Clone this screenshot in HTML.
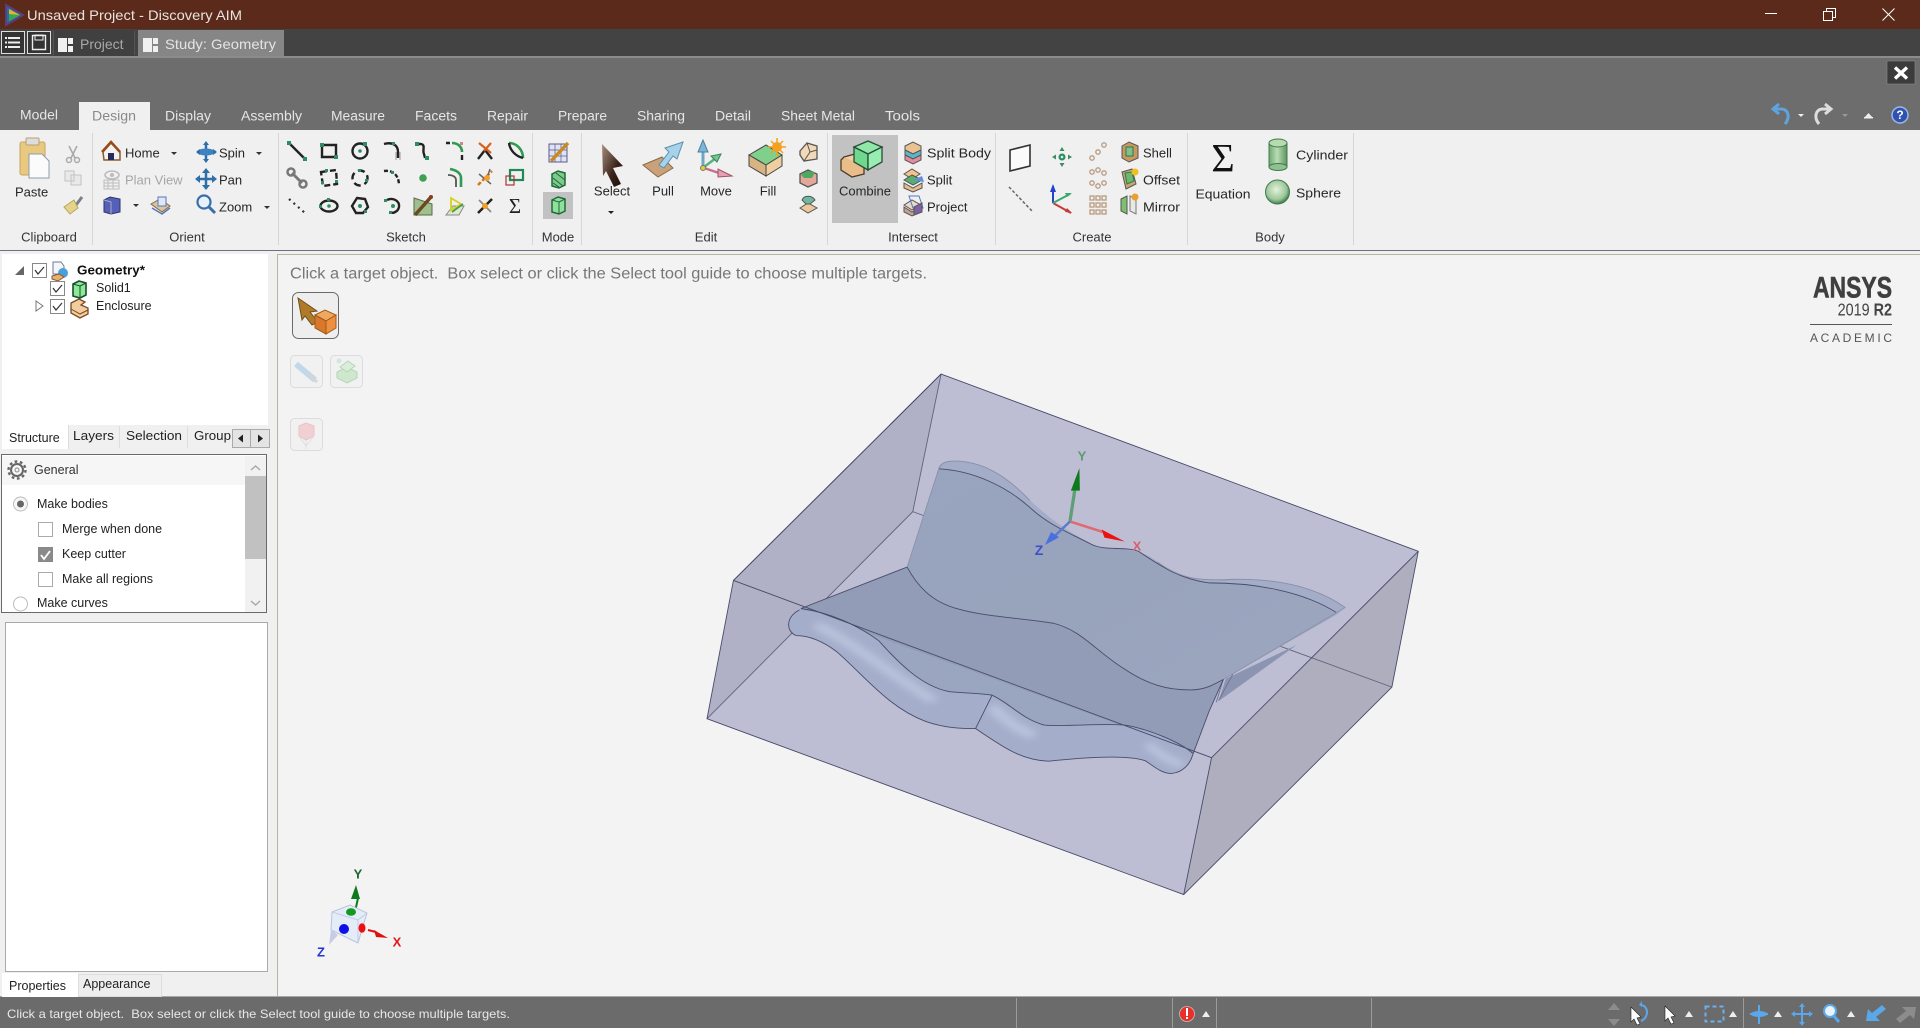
<!DOCTYPE html>
<html><head><meta charset="utf-8"><title>Unsaved Project - Discovery AIM</title>
<style>
html,body{margin:0;padding:0;width:1920px;height:1028px;overflow:hidden;background:#f0f0f0}
svg{position:absolute;left:0;top:0;display:block}
text{font-family:"Liberation Sans",sans-serif;font-size:13px;dominant-baseline:central;fill:#222}
.tab{font-size:13.5px;fill:#e6e6e6}
.rb{font-size:13px;fill:#262626}
.grp{font-size:13px;fill:#333}
.m{text-anchor:middle}
.k{fill:none;stroke:#222;stroke-width:2.4}
.g{fill:#2f8c62}
.ge{fill:none;stroke:#2f9a50;stroke-width:2.6}
.h{fill:none;stroke:#474c6a;stroke-width:.9;vector-effect:non-scaling-stroke}
.sep{stroke:#d6d6d6;stroke-width:1}
</style></head><body>
<svg width="1920" height="1028" viewBox="0 0 1920 1028">
<defs>
<linearGradient id="wall" x1="0" y1="0" x2="1" y2="1"><stop offset="0" stop-color="#99a4bf"/><stop offset=".5" stop-color="#98a3bc"/><stop offset="1" stop-color="#9fa8c1"/></linearGradient>
<radialGradient id="sph2" cx=".45" cy=".4" r=".6"><stop offset="0" stop-color="#e4f3dc"/><stop offset=".7" stop-color="#9cc79a"/><stop offset="1" stop-color="#3f7a4c"/></radialGradient>
<linearGradient id="cyl" x1="0" y1="0" x2="1" y2="0"><stop offset="0" stop-color="#6fa873"/><stop offset=".45" stop-color="#b9dcb4"/><stop offset="1" stop-color="#5b955f"/></linearGradient>
<linearGradient id="cur" x1="0" y1="0" x2="1" y2="1"><stop offset="0" stop-color="#a98f80"/><stop offset=".6" stop-color="#3a241a"/><stop offset="1" stop-color="#1a0e08"/></linearGradient>
<filter id="b1" x="-40%" y="-60%" width="180%" height="220%"><feGaussianBlur stdDeviation="9"/></filter>
</defs>

<!-- chrome backgrounds -->
<rect x="0" y="0" width="1920" height="29" fill="#5b2a1a"/>
<rect x="0" y="29" width="1920" height="27" fill="#434343"/>
<rect x="0" y="56" width="1920" height="2" fill="#8c8c8c"/>
<rect x="0" y="58" width="1920" height="72" fill="#6d6d6d"/>
<rect x="0" y="130" width="1920" height="120" fill="#f0f0f0"/>
<rect x="0" y="250" width="1920" height="1" fill="#6f6f80"/>
<rect x="0" y="251" width="1920" height="746" fill="#f0f0f0"/>
<rect x="277" y="255" width="1643" height="742" fill="#f3f3f3"/>
<path d="M277.5 997V254.5H1920" fill="none" stroke="#b8b4a4" stroke-width="1"/>
<rect x="0" y="997" width="1920" height="31" fill="#6b6b6b"/>
<rect x="0" y="996" width="1920" height="1" fill="#a8a8a8"/>

<!-- title -->
<g transform="translate(14,15)">
<path d="M-8 -10 L9 0 L-8 10Z" fill="#1f6fb0" stroke="#5f3d7a" stroke-width="2"/>
<path d="M-5 -6 L6 0 L-5 6Z" fill="#e3b52a"/><path d="M-5 -1 L6 0 L-5 6Z" fill="#36a84f"/>
</g>
<text x="27" y="15" style="font-size:14px;fill:#e8e3e0" textLength="215" lengthAdjust="spacingAndGlyphs">Unsaved Project - Discovery AIM</text>
<path d="M1765 13.5H1777" stroke="#fff" stroke-width="1"/>
<path d="M1823.5 11.5h9v9h-9zM1826.5 11.5v-3h9v9h-3" fill="none" stroke="#fff" stroke-width="1"/>
<path d="M1882.5 8.5l12 12M1894.5 8.5l-12 12" stroke="#fff" stroke-width="1"/>

<!-- second bar -->
<rect x="1.5" y="31.5" width="23" height="22" fill="#333" stroke="#ddd"/>
<path d="M8 38h12M8 42.5h12M8 47h12" stroke="#eee" stroke-width="2"/><path d="M5 38h2M5 42.5h2M5 47h2" stroke="#eee" stroke-width="2"/>
<rect x="27.5" y="31.5" width="23" height="22" fill="#333" stroke="#ddd"/>
<path d="M32.5 35.5h13v14h-13z" fill="none" stroke="#eee" stroke-width="1.4"/><rect x="35" y="35" width="8" height="5" fill="none" stroke="#eee"/>
<rect x="54" y="30" width="81" height="26" fill="#404040"/><path d="M53.500 31V55M134.500 31V55" stroke="#555"/>
<path d="M58 38h9v14h-9zM68 38h5v6h-5zM68 46h5v6h-5z" fill="#f0f0f0"/>
<text x="80" y="44" style="font-size:14px;fill:#a8a8a8">Project</text>
<rect x="138" y="30" width="146" height="26" fill="#868686"/>
<path d="M143 38h9v14h-9zM153 38h5v6h-5zM153 46h5v6h-5z" fill="#f0f0f0"/>
<text x="165" y="44" style="font-size:14px;fill:#e4e4e4" textLength="111" lengthAdjust="spacingAndGlyphs">Study: Geometry</text>

<!-- close X -->
<rect x="1887" y="61" width="28" height="23" fill="#3b3b3b" stroke="#888" stroke-width=".6"/>
<path d="M1895 67.500l12 11M1907 67.500l-12 11" stroke="#fff" stroke-width="3.400"/>

<!-- ribbon tabs -->
<rect x="79" y="102" width="71" height="28" fill="#f0f0f0"/>
<text x="20" y="115" class="tab" textLength="38" lengthAdjust="spacingAndGlyphs">Model</text>
<text x="92" y="116" class="tab" style="fill:#8a8a8a" textLength="44" lengthAdjust="spacingAndGlyphs">Design</text>
<text x="165" y="116" class="tab" textLength="46" lengthAdjust="spacingAndGlyphs">Display</text>
<text x="241" y="116" class="tab" textLength="61" lengthAdjust="spacingAndGlyphs">Assembly</text>
<text x="331" y="116" class="tab" textLength="54" lengthAdjust="spacingAndGlyphs">Measure</text>
<text x="415" y="116" class="tab" textLength="42" lengthAdjust="spacingAndGlyphs">Facets</text>
<text x="487" y="116" class="tab" textLength="41" lengthAdjust="spacingAndGlyphs">Repair</text>
<text x="558" y="116" class="tab" textLength="49" lengthAdjust="spacingAndGlyphs">Prepare</text>
<text x="637" y="116" class="tab" textLength="48" lengthAdjust="spacingAndGlyphs">Sharing</text>
<text x="715" y="116" class="tab" textLength="36" lengthAdjust="spacingAndGlyphs">Detail</text>
<text x="781" y="116" class="tab" textLength="74" lengthAdjust="spacingAndGlyphs">Sheet Metal</text>
<text x="885" y="116" class="tab" textLength="35" lengthAdjust="spacingAndGlyphs">Tools</text>

<!-- ribbon right icons -->
<path d="M1785 124 C1790 118 1789 110 1782 109 L1775 109 M1779 104 L1773 109 L1779 114" fill="none" stroke="#5ea4e0" stroke-width="3"/>
<path d="M1798 114h6l-3 3z" fill="#eee"/>
<path d="M1819 124 C1814 118 1815 110 1822 109 L1829 109 M1825 104 L1831 109 L1825 114" fill="none" stroke="#ddd" stroke-width="3"/>
<path d="M1842 114h6l-3 3z" fill="#999"/>
<path d="M1864 118l4.500 -5 4.500 5z" fill="#eee"/><rect x="1864" y="117" width="9" height="1.500" fill="#eee"/>
<circle cx="1900" cy="115" r="8" fill="#2f52b0" stroke="#9cb8e8" stroke-width="1.500"/>
<text x="1900" y="115" class="m" style="font-size:12px;font-weight:bold;fill:#fff">?</text>

<!-- group separators -->
<path class="sep" d="M92.500 133V245M278.500 133V245M532.500 133V245M581.500 133V245M827.500 133V245M995.500 133V245M1187.500 133V245M1353.500 133V245"/>

<!-- group labels -->
<text x="49" y="237" class="grp m">Clipboard</text>
<text x="187" y="237" class="grp m">Orient</text>
<text x="406" y="237" class="grp m">Sketch</text>
<text x="558" y="237" class="grp m">Mode</text>
<text x="706" y="237" class="grp m">Edit</text>
<text x="913" y="237" class="grp m">Intersect</text>
<text x="1092" y="237" class="grp m">Create</text>
<text x="1270" y="237" class="grp m">Body</text>

<!-- clipboard -->
<rect x="20" y="142" width="25" height="33" rx="2" fill="#e9c97f" stroke="#c9a55c"/>
<rect x="26" y="138" width="13" height="7" rx="1" fill="#ddd" stroke="#b9a070"/>
<path d="M29 154h13l7 7v17h-20z" fill="#fbfbfb" stroke="#8c9cb0"/>
<text x="15" y="192" class="rb">Paste</text>
<path d="M69 146l6 12M77 146l-6 12" stroke="#aaa" stroke-width="1.600"/><circle cx="69" cy="160" r="2.500" fill="none" stroke="#aaa" stroke-width="1.500"/><circle cx="77" cy="160" r="2.500" fill="none" stroke="#aaa" stroke-width="1.500"/>
<path d="M65 171h9l0 10h-9zM71 175h10v10h-10z" fill="#e9e9e9" stroke="#c2c2c2"/>
<path d="M82 197l-6 8" stroke="#7a7f8c" stroke-width="3"/><path d="M64 207 L74 200 L78 208 L70 214Z" fill="#e3d48a" stroke="#b9a55a"/>

<!-- orient -->
<path d="M103 152 L111 143 L120 152 V160 H104Z" fill="#f2f2f2" stroke="#8b5a2b" stroke-width="1.500"/>
<path d="M102 152 L111 142 L120 152" fill="none" stroke="#9a4a1a" stroke-width="2.500"/><rect x="108" y="153" width="6" height="7" fill="#2b2b5b"/>
<text x="125" y="153" class="rb">Home</text><path d="M171 152h6l-3 3z" fill="#333"/>
<ellipse cx="112" cy="175" rx="7" ry="4" fill="none" stroke="#bbb" stroke-width="1.500"/><circle cx="112" cy="175" r="2" fill="#bbb"/>
<path d="M104 180h15v9h-15z M104 183h15M104 186h15M108 180v9M113 180v9" fill="none" stroke="#bdbdbd"/>
<text x="125" y="180" class="rb" style="fill:#a6a6a6">Plan View</text>
<path d="M104 200 L110 197 L120 199 V212 L111 214 L104 212Z" fill="#5560b8" stroke="#30346a"/><path d="M104 200L111 202V214" fill="none" stroke="#aab"/>
<path d="M133 204h6l-3 3z" fill="#333"/>
<path d="M151 204 L160 199 L170 206 L162 212 Z" fill="#d9c3a0" stroke="#8a6a40"/><path d="M158 197h8v9h-8z" fill="#dfe7f6" stroke="#5578b8"/><path d="M152 208l10 6 8-6" fill="none" stroke="#5578b8" stroke-width="1.500"/>
<g stroke="#2f6fa8" stroke-width="2.500" fill="#3f82c0"><path d="M206 143V161M197 152H216" fill="none"/><ellipse cx="206" cy="152" rx="9" ry="3.500" stroke="none"/></g>
<path d="M206 141l-3 4h6zM206 163l-3-4h6zM196 152l4-3v6zM217 152l-4-3v6z" fill="#2f6fa8"/>
<text x="219" y="153" class="rb">Spin</text><path d="M256 152h6l-3 3z" fill="#333"/>
<path d="M206 170V188M197 179H215" stroke="#2f6fa8" stroke-width="2.500"/><path d="M206 168l-4 5h8zM206 190l-4-5h8zM195 179l5-4v8zM217 179l-5-4v8z" fill="#2f6fa8"/>
<text x="219" y="180" class="rb">Pan</text>
<circle cx="204" cy="202" r="6.500" fill="#e8f0fa" stroke="#3a6ea8" stroke-width="2.200"/><path d="M209 207l6 6" stroke="#3a6ea8" stroke-width="3"/>
<text x="219" y="207" class="rb">Zoom</text><path d="M264 206h6l-3 3z" fill="#333"/>

<!-- sketch icons -->
<g transform="translate(297,151)"><path class="k" d="M-7-7L7 7"/><rect class="g" x="-10" y="-10" width="4" height="4"/><rect class="g" x="6" y="6" width="4" height="4"/></g>
<g transform="translate(329,151)"><path class="k" d="M-7-6H7V6H-7Z"/><rect class="g" x="-9" y="-8" width="4" height="4"/><rect class="g" x="5" y="4" width="4" height="4"/></g>
<g transform="translate(360,151)"><circle class="k" r="7.500"/><circle class="g" r="1.800"/><rect class="g" x="3" y="-9" width="4" height="4"/></g>
<g transform="translate(393,151)"><path class="k" d="M-9-7C-2-9 5-7 5 1V7"/><path d="M3 1V9M7 1V9" stroke="#999" fill="none"/><rect class="g" x="-1" y="-9" width="3" height="3"/></g>
<g transform="translate(423,151)"><path class="k" d="M-7-7H-2C3-6-1-1 1 3L2 7"/><rect class="g" x="-8" y="-9" width="4" height="4"/><rect class="g" x="2" y="5" width="4" height="4"/></g>
<g transform="translate(455,151)"><path class="ge" d="M-3-8C3-8 7-4 7 1"/><path class="k" d="M-9-8H-5M7 4V9"/><rect x="5" y="-9" width="3" height="3" fill="#c88"/></g>
<g transform="translate(485,151)"><path class="k" d="M-7 8L0-1L7 8"/><path d="M-6-8L6 2M6-8L-1 0" stroke="#d9601a" stroke-width="2.200" fill="none"/></g>
<g transform="translate(515,151)"><path class="ge" d="M-6-8C2-8 8-1 8 7"/><path class="k" d="M-6-8C-5-1 0 5 8 7" stroke-width="1.800"/></g>
<g transform="translate(297,178)"><path d="M-5-5L5 5" stroke="#777" stroke-width="2.800"/><circle cx="-6" cy="-6" r="3.500" fill="none" stroke="#777" stroke-width="2.500"/><circle cx="6" cy="6" r="3.500" fill="none" stroke="#777" stroke-width="2.500"/></g>
<g transform="translate(329,178)"><path class="k" d="M-8-6L7-8L8 6L-6 8Z" stroke-dasharray="6 3"/><rect class="g" x="-4" y="-9" width="3" height="3"/><rect class="g" x="6" y="2" width="3" height="3"/><rect class="g" x="-8" y="3" width="3" height="3"/></g>
<g transform="translate(360,178)"><circle class="k" r="7.500" stroke-dasharray="7 4"/><rect class="g" x="-2" y="-9" width="3" height="3"/><rect class="g" x="5" y="1" width="3" height="3"/></g>
<g transform="translate(393,178)"><path class="k" d="M-9-7C-2-8 5-5 6 6" stroke-dasharray="4 2"/><rect class="g" x="-2" y="-7" width="3" height="3"/></g>
<g transform="translate(423,178)"><circle r="3.800" fill="#3fa050"/></g>
<g transform="translate(455,178)"><path class="ge" d="M-5-9C1-8 6-5 6 0V9"/><path d="M-7-3C-2-3 1-1 1 2V9" fill="none" stroke="#555" stroke-width="1.800"/></g>
<g transform="translate(485,178)"><path d="M-7 7L7-7" stroke="#d9761a" stroke-width="2.500" stroke-dasharray="4 2"/><path d="M-6-4L6 6M5-9L2 0" stroke="#666" stroke-width="1.500"/><circle cx="2" cy="0" r="3" fill="#f0a030"/></g>
<g transform="translate(515,178)"><rect x="-5" y="-8" width="13" height="10" fill="none" stroke="#1f8a55" stroke-width="2.200"/><rect x="-9" y="-2" width="8" height="9" fill="none" stroke="#a33" stroke-width="1.200"/></g>
<g transform="translate(297,206)"><path d="M-8-7L8 7" stroke="#333" stroke-width="2.200" stroke-dasharray="2 4"/></g>
<g transform="translate(329,206)"><ellipse class="k" rx="8.500" ry="5.500"/><circle class="g" r="1.800"/><rect class="g" x="-2" y="-8" width="3" height="3"/><rect class="g" x="-10" y="-1" width="3" height="3"/></g>
<g transform="translate(360,206)"><path class="k" d="M-3-8L5-7L8 1L3 7H-4L-8 0Z"/><circle class="g" r="2"/><rect class="g" x="4" y="4" width="3" height="3"/></g>
<g transform="translate(393,206)"><path class="k" d="M-6-6C0-9 7-5 6 1C5 6-1 8-2 6"/><rect class="g" x="-9" y="-7" width="3" height="3"/><circle class="g" r="2"/><rect class="g" x="-4" y="5" width="3" height="3"/></g>
<g transform="translate(423,206)"><path d="M-9-8L9-2V9H-9Z" fill="#9fbf8f" stroke="#556b44"/><path d="M-8 9L8-9" stroke="#6b4a20" stroke-width="3.500"/><circle cx="8" cy="-9" r="2" fill="#8a3a20"/></g>
<g transform="translate(455,206)"><path d="M-9 9L-2 0H9L4 9Z" fill="#dfe8d0" stroke="#888"/><path d="M-4-8L6-2L-4 4Z" fill="none" stroke="#d8d020" stroke-width="1.800"/><path d="M-3 6L8-2" stroke="#3f9f55" stroke-width="1.800"/></g>
<g transform="translate(485,206)"><path d="M-7 7L7-7" stroke="#222" stroke-width="2.500"/><path d="M-6-6L6 6" stroke="#888" stroke-width="1.800"/><circle r="3" fill="#f2a024"/></g>
<text x="515" y="206" class="m" style="font-size:21px;font-family:'Liberation Serif',serif;fill:#222">Σ</text>

<!-- mode -->
<path d="M549 144h18v18h-18z" fill="#dfe3f2" stroke="#5a5a90"/><path d="M555 144v18M561 144v18M549 150h18M549 156h18" stroke="#5a5a90" stroke-width=".7"/><path d="M551 161L568 143" stroke="#c98a20" stroke-width="3.400"/>
<path d="M552 174l6-3 7 2v12l-6 3-7-2z" fill="#7fc98a" stroke="#1f6a3a" stroke-width="1.500"/><path d="M553 178l10 8M553 183l6 4M556 173l9 7" stroke="#1f6a3a"/>
<rect x="543" y="192" width="30" height="27" fill="#c2c2c2"/>
<path d="M552 200l6-3 7 2v12l-6 3-7-2z" fill="#8fe09a" stroke="#1f6a3a" stroke-width="1.500"/><path d="M552 200l7 2v12M559 202l6-3" fill="none" stroke="#1f6a3a"/>

<!-- edit -->
<path d="M602 144L623 166L613 168L621 184L614 187L606 171L603 176Z" fill="url(#cur)"/>
<text x="612" y="191" class="rb m">Select</text><path d="M608 211h6l-3 3z" fill="#222"/>
<path d="M643 165L662 157L673 168L658 177Z" fill="#c9a27c" stroke="#8a6a48"/>
<path d="M683 142L665 148L669 152L659 165L664 168L673 156L677 159Z" fill="#a6d3ea" stroke="#5a8fb0"/>
<text x="663" y="191" class="rb m">Pull</text>
<path d="M703 168V150" stroke="#6fa6c8" stroke-width="3"/><path d="M703 140L698 152H708Z" fill="#7fb6d8" stroke="#4a80a0"/>
<path d="M704 167L720 155" stroke="#58b07a" stroke-width="2.500"/><path d="M721 154L711 156L717 162Z" fill="#6fc98f" stroke="#3a8058"/>
<path d="M704 168L722 174" stroke="#c8708a" stroke-width="2.500"/><path d="M732 176L718 169V177Z" fill="#e4a0b0" stroke="#a05068"/>
<circle cx="703" cy="168" r="2.500" fill="#e3d030" stroke="#777"/>
<text x="716" y="191" class="rb m">Move</text>
<path d="M749 155L766 145L782 155L766 165Z" fill="#7fd08a" stroke="#444"/><path d="M749 155V166L766 176V165Z" fill="#d8b483" stroke="#444"/><path d="M782 155V166L766 176V165Z" fill="#efcf9f" stroke="#444"/>
<circle cx="777" cy="147" r="5" fill="#f5a020"/><path d="M777 138V156M768 147H786M771 141L783 153M783 141L771 153" stroke="#f5a020" stroke-width="1.500"/>
<text x="768" y="191" class="rb m">Fill</text>
<path d="M800 151L807 143L817 146V159L804 161L800 155Z" fill="#f2d9b8" stroke="#555" stroke-width="1.300"/><path d="M807 143L810 152L804 161M810 152L817 150" fill="none" stroke="#555"/>
<path d="M800 174L808 170L817 174V183L808 187L800 183Z" fill="#e4a89a" stroke="#555" stroke-width="1.300"/><path d="M801 175L807 171L815 172L812 178L804 178Z" fill="#4fa860"/>
<path d="M800 208L808 203L817 208L808 213Z" fill="#edc89a" stroke="#555"/><path d="M802 200C804 195 812 195 815 200L810 204H806Z" fill="#6fb8a0" stroke="#555"/>

<!-- intersect -->
<rect x="832" y="135" width="66" height="88" fill="#c2c2c2"/>
<path d="M844 157L862 152V172L851 176L844 170Z" fill="#f2cfa0" stroke="#4a3a2a" stroke-width="1.300"/>
<path d="M844 157l-3 3v10l11 7 12-3v-8" fill="#e8bd8a" stroke="#4a3a2a" stroke-width="1.300"/>
<path d="M854 147L868 141L882 147L868 154Z" fill="#8fe8a8" stroke="#2b4a38" stroke-width="1.300"/>
<path d="M854 147V162L868 170V154Z" fill="#6fd88f" stroke="#2b4a38" stroke-width="1.300"/>
<path d="M882 147V162L868 170V154Z" fill="#98eeb0" stroke="#2b4a38" stroke-width="1.300"/>
<text x="865" y="191" class="rb m">Combine</text>
<path d="M905 146L913 142L921 146V150L913 154L905 150Z" fill="#eac190" stroke="#555"/><path d="M905 150L913 154L921 150V155L913 159L905 155Z" fill="#58b8c8" stroke="#555"/><path d="M905 155L913 159L921 155V160L913 164L905 160Z" fill="#e68aa0" stroke="#555"/>
<text x="927" y="153" class="rb" textLength="64" lengthAdjust="spacingAndGlyphs">Split Body</text>
<path d="M904 174L912 169L920 174L912 179Z" fill="#f2c48c" stroke="#555"/><path d="M904 180L912 175L922 180L913 185Z" fill="#58b070" stroke="#555"/><path d="M904 183L913 188L922 183V188L913 192L904 188Z" fill="#e8bc90" stroke="#555"/><path d="M913 180L922 176L924 182Z" fill="#6090d8"/>
<text x="927" y="180" class="rb">Split</text>
<path d="M904 205L912 200L921 205L912 210Z" fill="#e8d8c8" stroke="#555"/><path d="M909 196L919 196L923 208H913Z" fill="none" stroke="#5078c8"/><path d="M904 207L912 212L921 207V212L912 216L904 212Z" fill="#c8a090" stroke="#555"/><path d="M914 207L922 203V212L914 215Z" fill="#8060a0" stroke="#555"/>
<text x="927" y="207" class="rb">Project</text>

<!-- create -->
<path d="M1010 150L1030 145V166L1010 171Z" fill="#fbfbfb" stroke="#333" stroke-width="1.600"/>
<path d="M1009 187L1032 211" stroke="#666" stroke-width="1.500" stroke-dasharray="3 2"/>
<circle cx="1062" cy="157" r="3.500" fill="#2f8c62"/><circle cx="1062" cy="157" r="1.300" fill="#cfe"/>
<path d="M1062 147l-2.500 4h5zM1062 167l-2.500-4h5zM1052 157l4-2.500v5zM1072 157l-4-2.500v5z" fill="#3f8c62"/>
<path d="M1053 203V186" stroke="#2244cc" stroke-width="2"/><path d="M1053 184l-3 8h6z" fill="#2244cc"/>
<path d="M1053 203L1071 213" stroke="#c83a3a" stroke-width="2"/><path d="M1072 213l-7-1 2-4z" fill="#c83a3a"/>
<path d="M1053 203L1070 194" stroke="#3aa870" stroke-width="2"/><path d="M1072 193l-7 0 2 4z" fill="#3aa870"/>
<g fill="none" stroke="#b89b80" stroke-width="1.300"><circle cx="1092" cy="158" r="2.200"/><circle cx="1098" cy="152" r="2.200"/><circle cx="1104" cy="145" r="2.200"/><circle cx="1092" cy="172" r="2.200"/><circle cx="1098" cy="170" r="2.200"/><circle cx="1104" cy="173" r="2.200"/><circle cx="1092" cy="183" r="2.200"/><circle cx="1098" cy="186" r="2.200"/><circle cx="1104" cy="183" r="2.200"/>
<rect x="1090" y="196" width="4" height="4"/><rect x="1096" y="196" width="4" height="4"/><rect x="1102" y="196" width="4" height="4"/><rect x="1090" y="203" width="4" height="4"/><rect x="1096" y="203" width="4" height="4"/><rect x="1102" y="203" width="4" height="4"/><rect x="1090" y="210" width="4" height="4"/><rect x="1096" y="210" width="4" height="4"/><rect x="1102" y="210" width="4" height="4"/></g>
<path d="M1122 146L1129 142L1138 146V158L1129 162L1122 158Z" fill="#c9985f" stroke="#555"/><path d="M1126 147L1133 147V156L1126 156Z" fill="#7fc08f" stroke="#2e7a4a"/>
<text x="1143" y="153" class="rb">Shell</text>
<path d="M1122 172L1132 169L1136 184L1126 189Z" fill="#c9a56f" stroke="#555"/><path d="M1125 173L1132 172L1134 181L1127 184Z" fill="#6fb86f" stroke="#2e7a4a"/><circle cx="1135" cy="172" r="3.500" fill="#f0c020"/>
<text x="1143" y="180" class="rb" textLength="37" lengthAdjust="spacingAndGlyphs">Offset</text>
<path d="M1121 199L1127 196V214L1121 211Z" fill="#7fc070" stroke="#555"/><path d="M1130 196L1136 199V214L1130 211Z" fill="#e8e8e8" stroke="#777"/><circle cx="1135" cy="197" r="3.500" fill="#e8a030"/>
<text x="1143" y="207" class="rb" textLength="37" lengthAdjust="spacingAndGlyphs">Mirror</text>

<!-- body -->
<text x="1223" y="158" class="m" style="font-size:40px;font-family:'Liberation Serif',serif;fill:#111">Σ</text>
<text x="1223" y="194" class="rb m" textLength="55" lengthAdjust="spacingAndGlyphs">Equation</text>
<rect x="1269" y="143" width="18" height="24" fill="url(#cyl)" stroke="#3f7a4c"/>
<ellipse cx="1278" cy="143" rx="9" ry="4" fill="#b8dab0" stroke="#3f7a4c"/><ellipse cx="1278" cy="167" rx="9" ry="3.500" fill="#8fc08f" stroke="#3f7a4c"/>
<text x="1296" y="155" class="rb" textLength="52" lengthAdjust="spacingAndGlyphs">Cylinder</text>
<circle cx="1277.500" cy="192" r="12" fill="url(#sph2)" stroke="#3f7a4c"/>
<text x="1296" y="193" class="rb" textLength="45" lengthAdjust="spacingAndGlyphs">Sphere</text>

<!-- left tree panel -->
<rect x="2" y="254" width="266" height="171" fill="#fff"/>
<path d="M15 275L24 275L24 266Z" fill="#666"/>
<rect x="32.500" y="263.500" width="14" height="14" fill="#fff" stroke="#888"/><path d="M35 270l3 4 6-7" fill="none" stroke="#333" stroke-width="1.200"/>
<path d="M53 262h8l3 4v8h-11z" fill="#f4f6fa" stroke="#6c7a96"/><circle cx="63" cy="273" r="5" fill="#4aa0d8"/><path d="M52 276l7-2 5 3-6 4-6-2z" fill="#e8b070" stroke="#8a5a30"/>
<text x="77" y="270" style="font-weight:bold;font-size:13px;fill:#111" textLength="68" lengthAdjust="spacingAndGlyphs">Geometry*</text>
<rect x="50.500" y="281.500" width="14" height="14" fill="#fff" stroke="#888"/><path d="M53 288l3 4 6-7" fill="none" stroke="#333" stroke-width="1.200"/>
<path d="M73 284l6-3 7 2v12l-6 3-7-2z" fill="#8fe89a" stroke="#15502a" stroke-width="1.600"/><path d="M73 284l7 2v12M80 286l6-3" fill="none" stroke="#15502a"/>
<text x="96" y="288" style="font-size:12.500px;fill:#222">Solid1</text>
<path d="M36 301L43 306L36 311Z" fill="#fff" stroke="#777"/>
<rect x="50.500" y="299.500" width="14" height="14" fill="#fff" stroke="#888"/><path d="M53 306l3 4 6-7" fill="none" stroke="#333" stroke-width="1.200"/>
<path d="M71 303l8-4 6 3 -4 3 7 3v6l-8 4-9-5z" fill="#f2cda0" stroke="#7a4a20" stroke-width="1.300"/><path d="M71 309l9 5 8-4" fill="none" stroke="#7a4a20"/>
<text x="96" y="306" style="font-size:12.500px;fill:#222">Enclosure</text>

<!-- left tabs -->
<rect x="2" y="425" width="66" height="24" fill="#fff"/>
<path d="M68.500 425V449M119.500 426V448M187.500 426V448" stroke="#ddd"/>
<text x="9" y="438" style="fill:#222;font-size:12.500px">Structure</text>
<text x="73" y="436" style="fill:#222;font-size:12.500px" textLength="41" lengthAdjust="spacingAndGlyphs">Layers</text>
<text x="126" y="436" style="fill:#222;font-size:12.500px" textLength="56" lengthAdjust="spacingAndGlyphs">Selection</text>
<text x="194" y="436" style="fill:#222;font-size:12.500px" textLength="37" lengthAdjust="spacingAndGlyphs">Group</text>
<rect x="232.500" y="429.500" width="18" height="18" fill="#e4e4e4" stroke="#aaa"/><rect x="250.500" y="429.500" width="19" height="18" fill="#e4e4e4" stroke="#aaa"/>
<path d="M238 438.500l5-4v8zM263 438.500l-5-4v8z" fill="#222"/>

<!-- general options -->
<rect x="2" y="455" width="264" height="157" fill="#fff"/>
<rect x="2" y="456" width="243" height="29" fill="#f6f6f6"/>
<rect x="245" y="456" width="21" height="156" fill="#f1f1f1"/>
<rect x="245" y="476" width="21" height="83" fill="#c1c1c1"/>
<circle cx="20.500" cy="604" r="7" fill="#fff" stroke="#bbb"/>
<rect x="2" y="612" width="264" height="10" fill="#f0f0f0"/>
<rect x="1.500" y="454.500" width="265" height="158" fill="none" stroke="#6a6a6a"/>
<path d="M251 470l4.500-4 4.500 4" fill="none" stroke="#aaa" stroke-width="1.500"/><path d="M251 601l4.500 4 4.500-4" fill="none" stroke="#aaa" stroke-width="1.500"/>
<g transform="translate(17,470)"><circle r="6" fill="none" stroke="#666" stroke-width="2"/><circle r="8.500" fill="none" stroke="#666" stroke-width="2.400" stroke-dasharray="2.700 2.640"/><circle r="2" fill="none" stroke="#888"/></g>
<text x="34" y="470" style="font-size:12.500px;fill:#333">General</text>
<circle cx="20.500" cy="504" r="7" fill="#f6f6f6" stroke="#bbb"/><circle cx="20.500" cy="504" r="3.500" fill="#666"/>
<text x="37" y="504" style="font-size:12.500px;fill:#222">Make bodies</text>
<rect x="38.500" y="522.500" width="14" height="14" fill="#fff" stroke="#aaa"/>
<text x="62" y="529" style="font-size:12.500px;fill:#222">Merge when done</text>
<rect x="38.500" y="547.500" width="14" height="14" fill="#8a8a8a" stroke="#888"/><path d="M41 555l3 4 6-8" fill="none" stroke="#fff" stroke-width="1.800"/>
<text x="62" y="554" style="font-size:12.500px;fill:#222">Keep cutter</text>
<rect x="38.500" y="572.500" width="14" height="14" fill="#fff" stroke="#aaa"/>
<text x="62" y="579" style="font-size:12.500px;fill:#222">Make all regions</text>
<text x="37" y="603" style="font-size:12.500px;fill:#222">Make curves</text>

<!-- properties panel -->
<rect x="5.500" y="622.500" width="262" height="349" fill="#fff" stroke="#a9a9a9"/>
<rect x="2" y="973" width="76" height="24" fill="#fff"/>
<rect x="78.500" y="974.500" width="83" height="22" fill="#eeeeee" stroke="#ddd"/>
<text x="9" y="986" style="font-size:12.500px;fill:#222">Properties</text>
<text x="83" y="984" style="font-size:12.500px;fill:#222">Appearance</text>

<!-- viewport message -->
<text x="290" y="274" style="font-size:15.500px;fill:#777" textLength="637" lengthAdjust="spacingAndGlyphs">Click a target object.&#160; Box select or click the Select tool guide to choose multiple targets.</text>

<!-- tool guides -->
<rect x="292.500" y="292.500" width="46" height="46" rx="6" fill="#eeeeee" stroke="#6a6a6a"/>
<path d="M298 298L317 311L310 312L318 322L312 325L305 316L302 320Z" fill="#b07a28" stroke="#6e5020"/>
<path d="M315 315L325 310L336 315L326 321Z" fill="#f0a860" stroke="#a05a18"/><path d="M315 315V328L326 334V321Z" fill="#d8782a" stroke="#a05a18"/><path d="M336 315V328L326 334V321Z" fill="#ee9040" stroke="#a05a18"/>
<rect x="290.500" y="355.500" width="32" height="32" rx="4" fill="#f1f1f1" stroke="#dcdcdc"/>
<path d="M296 364L315 380" stroke="#c4d7e8" stroke-width="6"/><path d="M310 375L317 382" stroke="#d6d6d6" stroke-width="3"/>
<rect x="330.500" y="355.500" width="32" height="32" rx="4" fill="#f1f1f1" stroke="#dcdcdc"/>
<path d="M337 372L347 367L357 372V378L347 383L337 378Z" fill="#cde8cd" stroke="#b8d4b8"/><path d="M340 367L348 361L355 366L347 372Z" fill="#d8eed8" stroke="#b8d4b8"/><circle cx="339" cy="361" r="2.500" fill="#cfe8df"/>
<rect x="290.500" y="418.500" width="32" height="32" rx="4" fill="#f1f1f1" stroke="#dcdcdc"/>
<path d="M299 426L306 423L314 426V436L306 440L299 436Z" fill="#f2cfd2" stroke="#e6c4c8"/><path d="M299 436L306 446L314 436M306 440V449" fill="none" stroke="#dfdfdf"/>

<!-- ANSYS logo -->
<g transform="translate(1892,287.500) scale(.765,1)"><text x="0" y="0" text-anchor="end" style="font-size:30px;font-weight:bold;fill:#3f3f3f;stroke:#3f3f3f;stroke-width:.6">ANSYS</text></g>
<g transform="translate(1892,310) scale(.8,1)"><text x="0" y="0" text-anchor="end" style="font-size:18px;fill:#444">2019 <tspan style="font-weight:bold">R2</tspan></text></g>
<rect x="1810" y="324" width="82" height="1" fill="#555"/>
<text x="1810" y="338" style="font-size:12px;fill:#555" textLength="82">ACADEMIC</text>

<!-- 3D model -->
<g transform="translate(690,360) scale(.472,.351)">
<path d="M532 40L1543 545L1487 932L1046 1523L36 1022L92 628Z" fill="#bdbdd3"/>
<path d="M532 40L472 432L36 1022L92 628Z" fill="#b0b0c6"/>
<path d="M1105 1133L1543 545L1487 932L1046 1523Z" fill="#aeaebf"/>
<path d="M472 432L36 1022M472 432L532 40M472 432L1487 932" class="h" style="stroke:#5f637c"/>
<!-- wedge -->
<path d="M1135 908L1285 812L1120 972Z" fill="#8b94b0"/>
<path d="M1150 895L1120 970M1130 910L1115 975" class="h" style="stroke:#6c7290"/>
<!-- surface -->
<path d="M527 310C530 295 540 288 560 288C620 288 670 330 720 400C760 450 800 490 860 530C900 545 950 530 990 575C1040 625 1080 630 1150 625C1250 622 1330 650 1388 705L1370 725L1130 910L1100 1000L1065 1125C1060 1150 1045 1175 1020 1178C1000 1178 985 1160 965 1142C930 1125 850 1130 760 1143C700 1140 660 1100 605 1050C570 1050 540 1048 500 1030C420 990 370 900 310 830C280 800 250 785 225 785C205 775 200 735 232 712L460 590Z" fill="url(#wall)"/>
<!-- floor -->
<path d="M460 590C480 640 510 690 570 710C620 730 700 735 770 750C830 770 860 830 920 880C970 925 1010 940 1060 940C1090 940 1110 925 1130 910L1100 1000L1065 1125C1040 1090 970 1050 920 1040C860 1035 800 1045 750 1040C700 1020 680 980 640 955C620 950 590 950 550 945C490 930 440 860 400 800C360 760 300 720 235 708Z" fill="#929cb6"/>
<!-- lower part of floor -->
<path d="M360 770L1065 1115C1040 1090 970 1050 920 1040C860 1035 800 1045 750 1040C700 1020 680 980 640 955C620 950 590 950 550 945C490 930 440 860 400 800Z" fill="#9aa5bf"/>
<!-- lip -->
<path d="M232 712C300 720 360 760 400 800C440 860 490 930 550 945C590 950 620 950 640 955C680 980 700 1020 750 1040C800 1045 860 1035 920 1040C970 1050 1040 1090 1065 1125C1060 1150 1045 1175 1020 1178C1000 1178 985 1160 965 1142C930 1125 850 1130 760 1143C700 1140 660 1100 605 1050C570 1050 540 1048 500 1030C420 990 370 900 310 830C280 800 250 785 225 785C205 775 200 735 232 712Z" fill="#a4aeca"/>
<g filter="url(#b1)" fill="none" stroke="#b9c3dc" stroke-linecap="round">
<path d="M275 760C350 810 430 900 510 965" stroke-width="24"/>
<path d="M645 995C670 1025 690 1050 720 1065" stroke-width="26"/>
<path d="M975 1100C995 1125 1015 1140 1035 1150" stroke-width="22"/>
</g>
<!-- rim -->
<path d="M527 310C530 295 540 288 560 288C620 288 670 330 720 400C760 450 800 490 860 530C900 545 950 530 990 575C1040 625 1080 630 1150 625C1250 622 1330 650 1388 705L1370 725C1300 660 1200 635 1100 635C1040 625 1000 590 950 545C920 530 880 545 850 525C800 490 760 470 720 420C670 360 600 315 527 310Z" fill="#a3adc8"/>
<!-- hairlines -->
<path class="h" d="M527 310C600 315 670 360 720 420C760 470 800 490 850 525C880 545 920 530 950 545C1000 590 1040 625 1100 635C1200 635 1300 660 1370 720"/>
<path class="h" d="M460 590C480 640 510 690 570 710C620 730 700 735 770 750C830 770 860 830 920 880C970 925 1010 940 1060 940C1090 940 1110 925 1130 910"/>
<path class="h" d="M460 590L235 708"/>
<path class="h" d="M1130 910L1388 705M527 310L460 590" style="stroke:#8a91ab"/>
<path class="h" d="M235 708C300 720 360 760 400 800C440 860 490 930 550 945C590 950 620 950 640 955C680 980 700 1020 750 1040C800 1045 860 1035 920 1040C970 1050 1040 1090 1065 1120"/>
<path class="h" d="M640 955L605 1050M1130 910L1100 1000L1065 1125"/>
<path class="h" d="M232 712C200 735 205 775 225 785C250 785 280 800 310 830C370 900 420 990 500 1030C540 1048 570 1050 605 1050C660 1100 700 1140 760 1143C850 1130 930 1125 965 1142C985 1160 1000 1178 1020 1178C1045 1175 1060 1150 1065 1125"/>
<path class="h" d="M720 400C670 330 620 288 560 288C540 288 530 295 527 310M1388 705C1330 650 1250 622 1150 625C1080 630 1040 625 990 575" style="stroke:#878ea8"/>
<!-- box edges -->
<path class="h" d="M532 40L1543 545L1487 932L1046 1523L36 1022L92 628Z"/>
<path class="h" d="M92 628L532 40M92 628L1105 1133L1046 1523M1105 1133L1543 545"/>
<!-- triad -->
<path d="M805 460L815 372" stroke="#5f9f78" stroke-width="7"/>
<path d="M825 308L807 372H826Z" fill="#0e7a1e"/>
<path d="M805 460L875 490" stroke="#e06a70" stroke-width="7"/>
<path d="M921 517L872 483L878 506Z" fill="#ee1111"/>
<path d="M805 460L770 505" stroke="#5a7ad0" stroke-width="6"/>
<path d="M752 527L765 490L782 505Z" fill="#4a70e0"/>
</g>
<text x="1082" y="456" class="m" style="font-size:13px;font-weight:bold;fill:#5c9a70">Y</text>
<text x="1137" y="546" class="m" style="font-size:13px;font-weight:bold;fill:#d8606c">X</text>
<text x="1039" y="550" class="m" style="font-size:14px;font-weight:bold;fill:#3f4fc8">Z</text>

<!-- corner triad -->
<path d="M355 912L358 898" stroke="#0e7a1e" stroke-width="2"/><path d="M356 885L351 899H360Z" fill="#0e7a1e"/>
<text x="358" y="874" class="m" style="font-size:13px;font-weight:bold;fill:#1c6630">Y</text>
<path d="M368 930L376 932" stroke="#e01010" stroke-width="2"/><path d="M388 938L374 930L376 937Z" fill="#e01010"/>
<text x="397" y="942" class="m" style="font-size:13px;font-weight:bold;fill:#e01818">X</text>
<text x="321" y="952" class="m" style="font-size:13px;font-weight:bold;fill:#2035d8">Z</text>
<path d="M332 912L350 905L367 913L358 943L331 930Z" fill="#e4ecf8" stroke="#b8c4de"/><path d="M332 912L358 920L358 943M358 920L367 913" fill="none" stroke="#c2cde4"/>
<path d="M331 930L338 935L329 945Z" fill="#c6cce8"/>
<ellipse cx="351" cy="912" rx="5" ry="3.800" fill="#129a20"/>
<circle cx="344" cy="929" r="5" fill="#0f10e8"/>
<ellipse cx="362" cy="928" rx="3.500" ry="4.800" fill="#ee1010"/>

<!-- status bar -->
<text x="7" y="1014" style="font-size:12px;fill:#e8e8e8" textLength="503" lengthAdjust="spacingAndGlyphs">Click a target object.&#160; Box select or click the Select tool guide to choose multiple targets.</text>
<path d="M1016.500 998V1028M1172.500 998V1028M1216.500 998V1028M1371.500 998V1028M1743.500 998V1028" stroke="#9a9a9a"/>
<circle cx="1187" cy="1014" r="7.500" fill="#e8302a" stroke="#c9bdbd" stroke-width=".8"/><rect x="1186" y="1008" width="2" height="8" fill="#fff"/><rect x="1186" y="1017" width="2" height="2" fill="#fff"/>
<path d="M1202 1017l4-6 4 6z" fill="#eee"/>
<path d="M1608 1010l6-7 6 7z" fill="#8c8c8c"/><path d="M1608 1019l6 7 6-7z" fill="#8c8c8c"/>
<path d="M1631 1007L1631 1022L1634 1019L1637 1025L1640 1024L1637 1018L1641 1017Z" fill="#fff" stroke="#222" stroke-width=".6"/>
<path d="M1641 1005C1649 1006 1649 1018 1641 1021" fill="none" stroke="#5aa8ea" stroke-width="2"/><path d="M1639 1005l3-4v6z" fill="#5aa8ea"/>
<path d="M1665 1006L1665 1021L1668 1018L1671 1024L1674 1023L1671 1017L1675 1016Z" fill="#fff" stroke="#222" stroke-width=".6"/>
<path d="M1685 1017l4-6 4 6z" fill="#eee"/>
<rect x="1705.500" y="1006.500" width="18" height="15" fill="none" stroke="#6cb2ee" stroke-width="2" stroke-dasharray="4 3"/>
<path d="M1729 1017l4-6 4 6z" fill="#eee"/>
<path d="M1759 1005V1024M1750 1014H1768" stroke="#5aa8ea" stroke-width="2"/><ellipse cx="1759" cy="1014" rx="8" ry="3" fill="#5aa8ea"/>
<path d="M1774 1017l4-6 4 6z" fill="#eee"/>
<path d="M1802 1005V1024M1793 1014H1811" stroke="#5aa8ea" stroke-width="2"/><path d="M1802 1003l-3 4h6zM1802 1026l-3-4h6zM1791 1014l4-3v6zM1813 1014l-4-3v6z" fill="#5aa8ea"/>
<circle cx="1830" cy="1011" r="6" fill="#eaf3fb" stroke="#5aa8ea" stroke-width="2"/><path d="M1834 1016l5 6" stroke="#5aa8ea" stroke-width="3"/>
<path d="M1847 1017l4-6 4 6z" fill="#eee"/>
<path d="M1866 1021L1880 1021L1876 1017L1886 1009L1882 1005L1872 1013L1868 1009Z" fill="#5aa8ea"/>
<path d="M1916 1007L1902 1007L1906 1011L1896 1019L1900 1023L1910 1015L1914 1019Z" fill="#8c8c8c"/>
</svg>
</body></html>
